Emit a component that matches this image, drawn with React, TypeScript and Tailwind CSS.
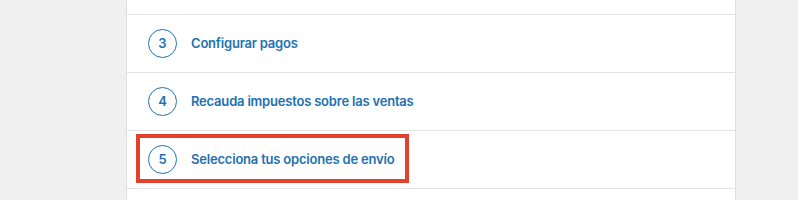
import { JSX } from "react";

const steps = [
  { n: 2, label: "Añade productos" },
  { n: 3, label: "Configurar pagos" },
  { n: 4, label: "Recauda impuestos sobre las ventas" },
  { n: 5, label: "Selecciona tus opciones de envío", highlight: true },
  { n: 6, label: "Personaliza tu tienda" },
];

function StepRow({ n, label, highlight }: { n: number; label: string; highlight?: boolean }): JSX.Element {
  return (
    <div className="relative flex h-[58px] shrink-0 items-center border-b border-[#e4e4e4] pl-[21px]">
      {highlight && (
        <div className="pointer-events-none absolute left-[9px] top-[3px] h-[49px] w-[273px] border-4 border-[#e3412b]" />
      )}
      <div className="flex h-[29px] w-[29px] items-center justify-center rounded-full border border-[#2271b1] text-[13px] font-semibold text-[#2271b1]">
        {n}
      </div>
      <span className="ml-[14px] text-[13px] font-semibold tracking-[-0.2px] text-[#2271b1]">{label}</span>
    </div>
  );
}

export default function App() {
  return (
    <div className="h-[200px] w-[798px] overflow-hidden bg-[#f0f0f0] font-['Inter',sans-serif]">
      <div className="ml-[126px] flex h-[200px] w-[610px] flex-col border-x border-[#e0e0e0] bg-white">
        <div className="-mt-[43px] flex flex-col">
          {steps.map((s) => (
            <StepRow key={s.n} {...s} />
          ))}
        </div>
      </div>
    </div>
  );
}
